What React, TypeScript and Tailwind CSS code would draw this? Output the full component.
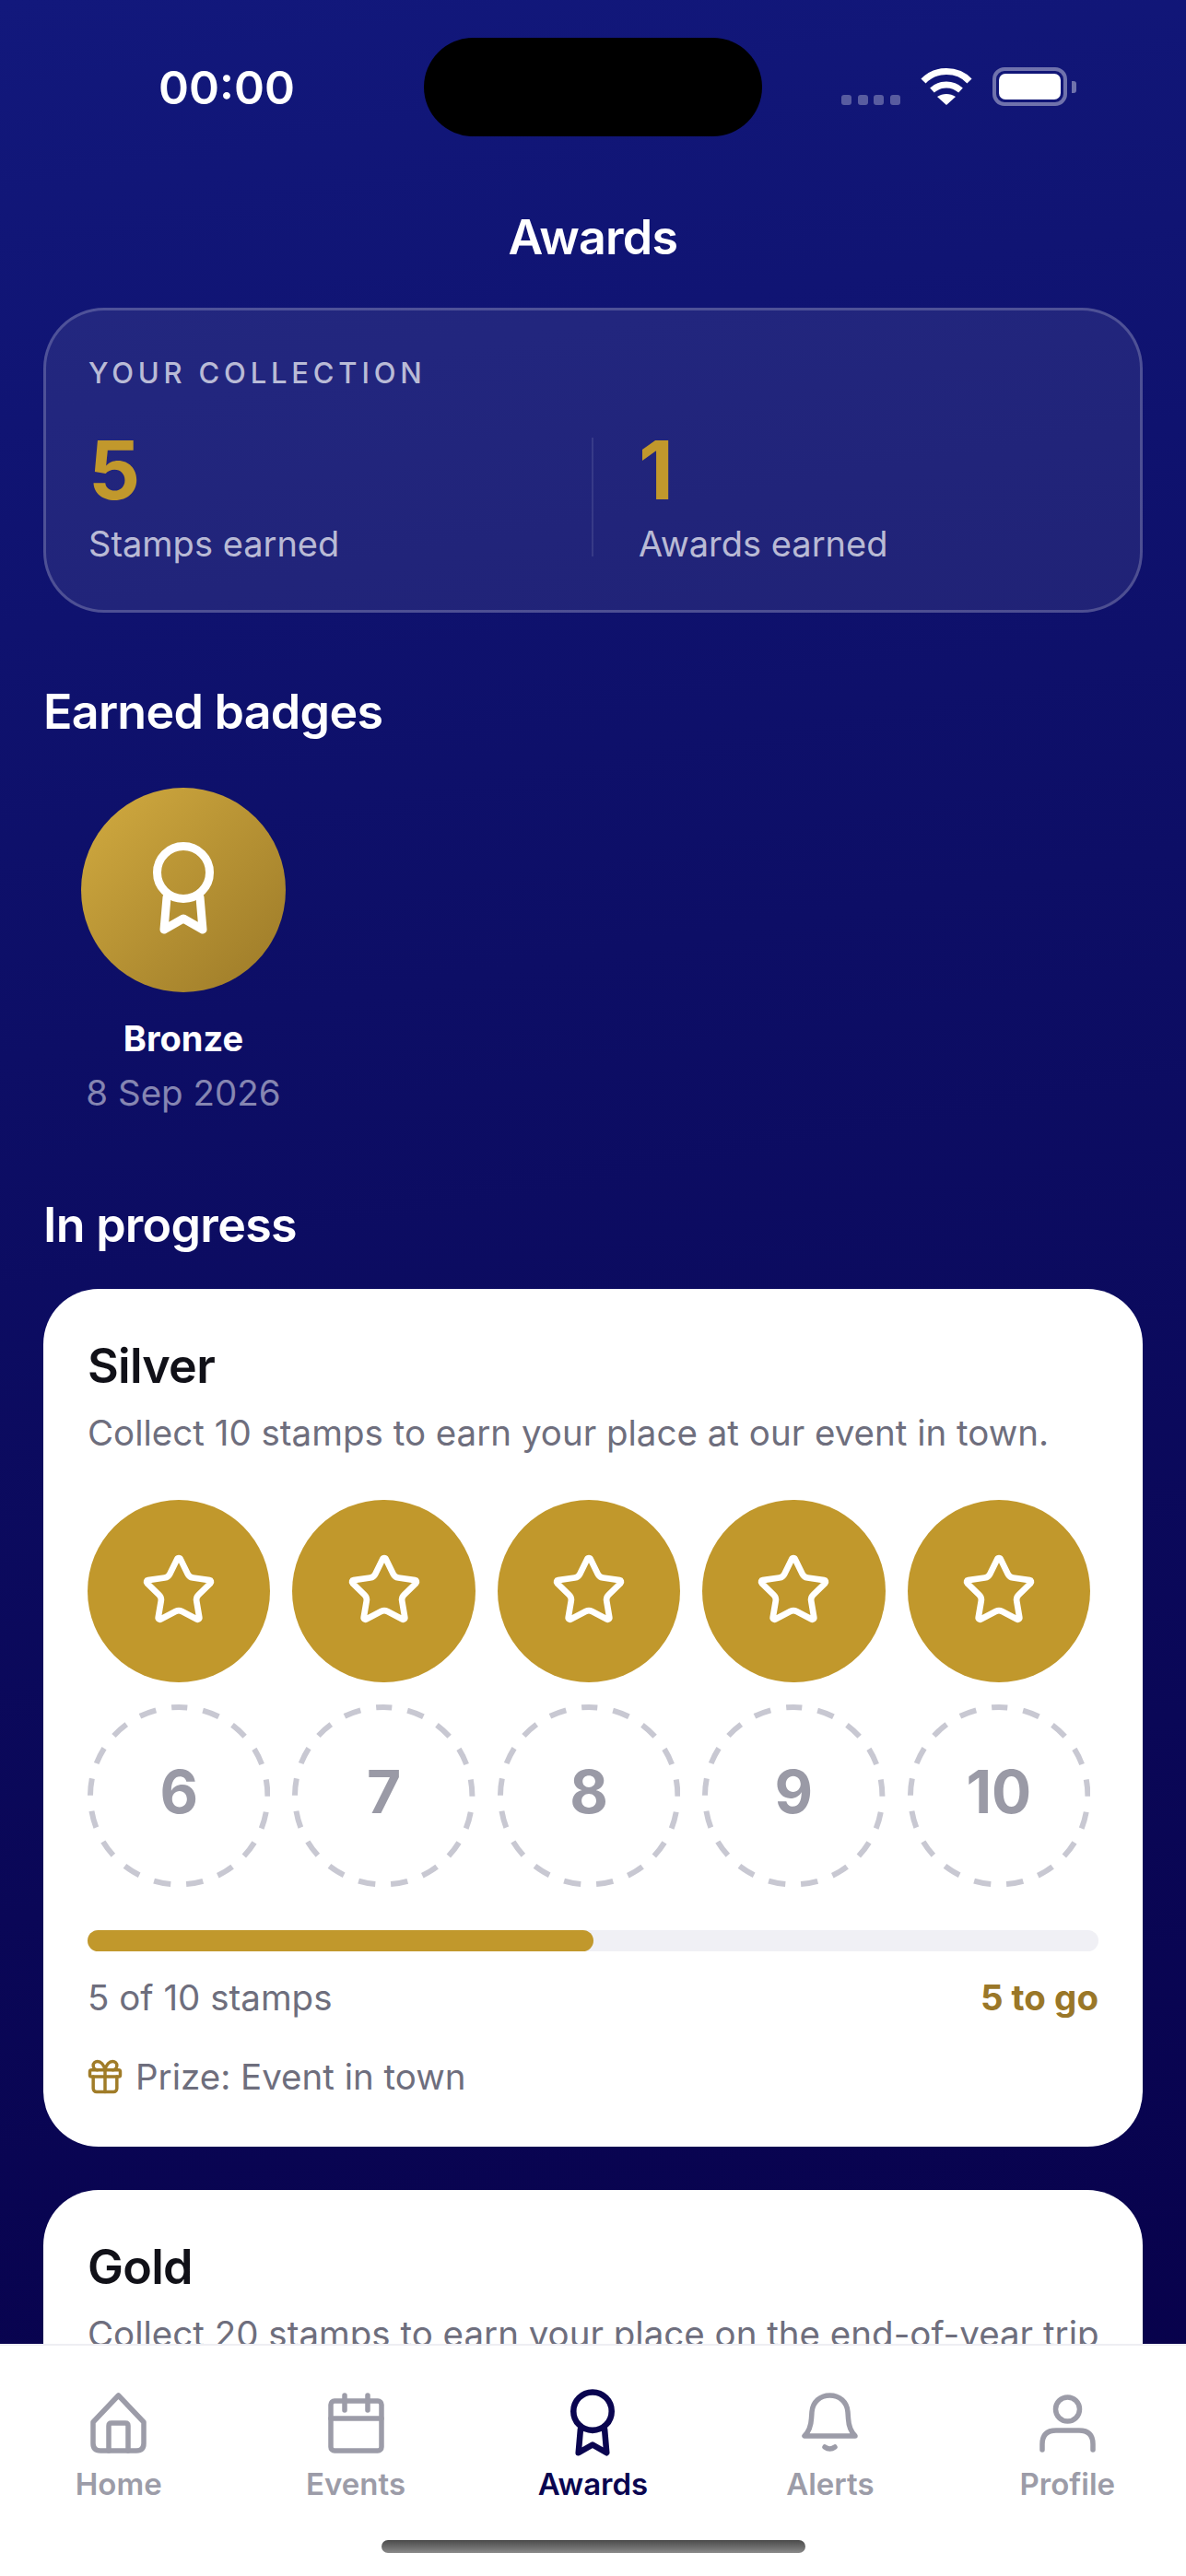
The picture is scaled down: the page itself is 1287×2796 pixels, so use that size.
import { Gift, Star } from 'lucide-react';

const GOLD = 'bg-[#c1982c]';

const AwardIcon = ({ className, stroke }: { className: string; stroke: string }) => (
  <svg viewBox="0 0 66 100" fill="none" stroke={stroke} strokeWidth="9" strokeLinecap="round" strokeLinejoin="round" className={className}>
    <circle cx="33" cy="33" r="28.5" />
    <path d="M15 60 12 95 33 83 54 95 51 60" />
  </svg>
);

const HomeIcon = () => (
  <svg viewBox="0 0 61 66" fill="none" stroke="#9c9ca8" strokeWidth="5.5" strokeLinecap="round" strokeLinejoin="round" className="w-[61px] h-[66px]">
    <path d="M30.5 3 3 32v23q0 8 8 8h39q8 0 8-8V32z" />
    <path d="M20 63V36q0-3 3-3h15q3 0 3 3v27" />
  </svg>
);

const CalendarIcon = () => (
  <svg viewBox="0 0 61 66" fill="none" stroke="#9c9ca8" strokeWidth="5.5" strokeLinecap="round" strokeLinejoin="round" className="w-[61px] h-[66px]">
    <rect x="3" y="9" width="55" height="54" rx="4" />
    <path d="M3 28h55M18 3v16M43 3v16" />
  </svg>
);

const BellIcon = () => (
  <svg viewBox="0 0 61 66" fill="none" stroke="#9c9ca8" strokeWidth="5.5" strokeLinecap="round" strokeLinejoin="round" className="w-[61px] h-[66px]">
    <path d="M3 47h55c-5-5-7-10-7.500-19l-.5-7c-.8-11-9-18-19.500-18S11.800 10 11 21l-.5 7C10 37 8 42 3 47z" />
    <path d="M25 59q5.500 4 11 0" />
  </svg>
);

const PersonIcon = () => (
  <svg viewBox="0 0 61 66" fill="none" stroke="#9c9ca8" strokeWidth="5.5" strokeLinecap="round" strokeLinejoin="round" className="w-[61px] h-[66px]">
    <circle cx="30.500" cy="18" r="13" />
    <path d="M3 62v-6q0-15 15-15h25q15 0 15 15v6" />
  </svg>
);

const WifiIcon = () => (
  <svg viewBox="0 0 56 41" className="w-[56px] h-[41px]" fill="none">
    <path d="M3 15C16 1 40 1 53 15" stroke="#fff" strokeWidth="7" />
    <path d="M12.500 25c9-8 22-8 31 0" stroke="#fff" strokeWidth="7" />
    <path d="M18 32c6-4 14-4 20 0l-10 9z" fill="#fff" />
  </svg>
);

// dashed outline for a stamp that has not been collected yet
const OpenStamp = ({ n }: { n: number }) => (
  <div className="relative aspect-square flex items-center justify-center">
    <svg viewBox="0 0 199 199" className="absolute inset-0" fill="none">
      <circle cx="99.500" cy="99.500" r="96.500" stroke="#c8c8d2" strokeWidth="6" strokeDasharray="18.500 17.170" strokeDashoffset="9.250" transform="rotate(-90 99.500 99.500)" />
    </svg>
    <span className="-mt-[9px] text-[64px] leading-none font-bold text-[#9a9aa6]">{n}</span>
  </div>
);

const FullStamp = () => (
  <div className={`aspect-square rounded-full ${GOLD} flex items-center justify-center`}>
    <Star size={84} color="#fff" strokeWidth={1.9} className="-mt-[2px]" />
  </div>
);

const tabs = [
  { label: 'Home', icon: <HomeIcon /> },
  { label: 'Events', icon: <CalendarIcon /> },
  { label: 'Awards', icon: <AwardIcon className="w-[48px] h-[73px] -mt-[4px] -mb-[3px]" stroke="#0a0550" />, active: true },
  { label: 'Alerts', icon: <BellIcon /> },
  { label: 'Profile', icon: <PersonIcon /> },
];

export default function App() {
  return (
    <div className="h-[2796px] flex flex-col overflow-hidden bg-[linear-gradient(170deg,#12187c_0%,#0d0e66_38%,#070048_100%)] font-['Inter',sans-serif]">
      <main className="flex-1 min-h-0 overflow-hidden">
        {/* status bar */}
        <div className="flex items-end pt-[41px] pl-[172px]">
          <span className="w-[146px] self-center text-[50px] leading-none font-semibold text-white">00:00</span>
          <div className="ml-[142px] w-[367px] h-[107px] rounded-[54px] bg-black" />
          <div className="ml-[86px] mb-[34px] flex gap-[6.500px]">
            {[0, 1, 2, 3].map((i) => (
              <div key={i} className="w-[11px] h-[11px] rounded-[3px] bg-white/30" />
            ))}
          </div>
          <div className="ml-[22px] mb-[34px]">
            <WifiIcon />
          </div>
          <div className="ml-[22px] mb-[33px] flex items-center gap-[5px]">
            <div className="w-[81px] h-[42px] rounded-[13px] border-[4px] border-white/40 p-[3px]">
              <div className="w-full h-full rounded-[7px] bg-white" />
            </div>
            <div className="w-[5px] h-[13px] rounded-r-[3px] bg-white/40" />
          </div>
        </div>

        <h1 className="mt-[84px] text-center text-[52px] leading-[52px] font-semibold tracking-[-0.014em] text-white">Awards</h1>

        <div className="px-[47px]">
          {/* totals */}
          <section className="mt-[50px] h-[331px] rounded-[66px] border-[3px] border-white/20 bg-white/[0.08] pl-[46px] pt-[50px]">
            <p className="text-[31px] leading-[36px] font-medium tracking-[0.155em] text-white/70">YOUR COLLECTION</p>
            <div className="mt-[43px] flex">
              <div className="w-[546px]">
                <p className="text-[88px] leading-[88px] font-bold text-[#c1982c]">5</p>
                <p className="mt-[14px] text-[38px] leading-[44px] text-white/70">Stamps earned</p>
              </div>
              <div className="w-[2px] h-[129px] self-center bg-white/10" />
              <div className="pl-[49px]">
                <p className="text-[88px] leading-[88px] font-bold text-[#c1982c]">1</p>
                <p className="mt-[14px] text-[38px] leading-[44px] text-white/70">Awards earned</p>
              </div>
            </div>
          </section>

          <h2 className="mt-[80px] text-[52px] leading-[56px] font-semibold tracking-[-0.014em] text-white">Earned badges</h2>

          <div className="mt-[54px] ml-[41px] w-[222px] flex flex-col items-center">
            <div className="w-[222px] h-[222px] rounded-full bg-gradient-to-br from-[#d2ab40] to-[#9c7a28] flex items-center justify-center">
              <AwardIcon className="w-[66px] h-[100px] -mt-[4px]" stroke="#fff" />
            </div>
            <p className="mt-[28px] text-[38px] leading-[44px] font-bold text-white whitespace-nowrap">Bronze</p>
            <p className="mt-[15px] text-[38.500px] leading-[44px] text-white/50 whitespace-nowrap">8 Sep 2026</p>
          </div>

          <h2 className="mt-[94px] text-[52px] leading-[56px] font-semibold tracking-[-0.014em] text-white">In progress</h2>

          {/* silver */}
          <section className="mt-[41px] h-[931px] rounded-[60px] bg-white px-[48px] pt-[56px]">
            <h3 className="text-[52px] leading-[56px] font-semibold tracking-[-0.014em] text-[#111118]">Silver</h3>
            <p className="mt-[22px] text-[38.500px] leading-[44px] text-[#6e6e7d] whitespace-nowrap">
              Collect 10 stamps to earn your place at our event in town.
            </p>
            <div className="mt-[51px] grid grid-cols-5 gap-[24px] w-[1088px]">
              {[0, 1, 2, 3, 4].map((i) => (
                <FullStamp key={i} />
              ))}
              {[6, 7, 8, 9, 10].map((n) => (
                <OpenStamp key={n} n={n} />
              ))}
            </div>
            <div className="mt-[46px] h-[23px] rounded-full bg-[#f0f0f5]">
              <div className={`h-full w-1/2 rounded-full ${GOLD}`} />
            </div>
            <div className="mt-[28px] flex items-center justify-between">
              <span className="text-[38.500px] leading-[44px] text-[#6e6e7d]">5 of 10 stamps</span>
              <span className="text-[38.500px] leading-[44px] font-bold text-[#9a7728]">5 to go</span>
            </div>
            <div className="mt-[42px] flex items-center gap-[11px]">
              <Gift size={44} color="#a07c28" strokeWidth={1.9} className="-ml-[3px]" />
              <span className="text-[38.500px] leading-[44px] text-[#6e6e7d]">Prize: Event in town</span>
            </div>
          </section>

          {/* gold, runs under the tab bar */}
          <section className="mt-[47px] rounded-t-[60px] bg-white px-[48px] pt-[56px] h-[400px]">
            <h3 className="text-[52px] leading-[56px] font-semibold tracking-[-0.014em] text-[#111118]">Gold</h3>
            <p className="mt-[22px] text-[38.500px] leading-[44px] text-[#6e6e7d] whitespace-nowrap">
              Collect 20 stamps to earn your place on the end-of-year trip
            </p>
          </section>
        </div>
      </main>

      {/* tab bar */}
      <nav className="h-[252px] shrink-0 bg-white border-t-2 border-[#eeeef3] flex flex-col">
        <div className="grid grid-cols-5 pt-[51px]">
          {tabs.map((t) => (
            <div key={t.label} className="flex flex-col items-center">
              {t.icon}
              <span className={`mt-[13px] text-[33px] leading-[40px] font-semibold ${t.active ? 'text-[#0a0550]' : 'text-[#9c9ca8]'}`}>
                {t.label}
              </span>
            </div>
          ))}
        </div>
        <div className="mx-auto mt-[41px] w-[460px] h-[14px] rounded-full bg-gradient-to-b from-[#4a4a4a] to-[#8a8a8a]" />
      </nav>
    </div>
  );
}
